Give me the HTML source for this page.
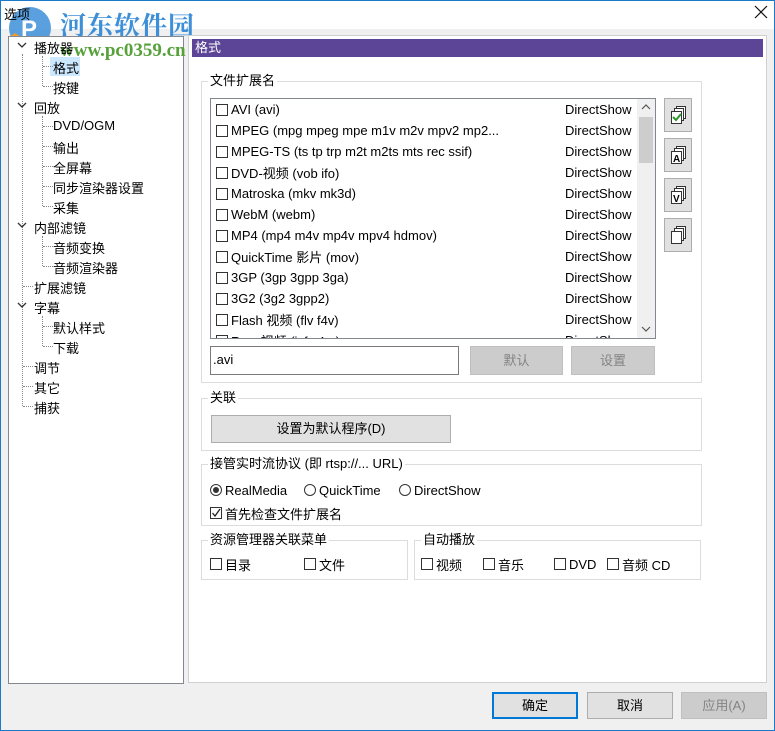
<!DOCTYPE html>
<html><head><meta charset="utf-8"><style>
*{margin:0;padding:0;box-sizing:border-box}
body{width:775px;height:731px;background:#f0f0f0;font-family:"Liberation Sans","Noto Sans CJK SC",sans-serif;font-size:13px;color:#000;position:relative;overflow:hidden}
.a{position:absolute;white-space:nowrap}
.l{display:flex;align-items:center;height:16px}
.cb{display:inline-block;width:12px;height:12px;border:1px solid #333;background:#fff;margin-right:3px;position:relative;flex:none}
.rb{display:inline-block;width:12px;height:12px;border:1px solid #333;border-radius:50%;background:#fff;margin-right:3px;position:relative;flex:none}
.grp{position:absolute;border:1px solid #dcdcdc}
.gl{position:absolute;top:-9px;left:6px;background:#fff;padding:0 2px;line-height:16px}
.btn{position:absolute;background:#e1e1e1;border:1px solid #adadad;text-align:center}
.dis{background:#cccccc;border-color:#bfbfbf;color:#838383}
.dv{position:absolute;border-left:1px dotted #888}
.dh{position:absolute;border-top:1px dotted #888;width:10px}
.ib{position:absolute;width:28px;height:34px;background:#e1e1e1;border:1px solid #adadad}
.row{display:flex;align-items:center;height:21px}
</style></head><body>
<div class="a" style="left:0;top:0;width:775px;height:29px;background:#fff"></div>
<div class="a" style="left:0;top:0;width:1px;height:731px;background:#1979ca"></div>
<div class="a" style="right:0;top:0;width:1px;height:731px;background:#1979ca"></div>
<div class="a" style="left:0;bottom:0;width:775px;height:1px;background:#1979ca"></div>
<div class="a" style="left:0;top:0;width:775px;height:1px;background:#1979ca"></div>
<!-- watermark -->
<svg class="a" style="left:5px;top:5px" width="50" height="50" viewBox="0 0 50 50"><circle cx="25" cy="23" r="21" fill="#3d8fd8" opacity="0.85"/><path d="M4 32 Q20 50 44 30 Q30 42 10 28Z" fill="#f39a2a"/><text x="16" y="32" font-size="24" fill="#fff" font-family="Liberation Sans" font-weight="bold">P</text></svg>
<div class="a" style="left:4px;top:4px;font-size:13px">选项</div>
<div class="a" style="left:60px;top:6px;font-size:26px;font-weight:bold;color:#3d8fd8;font-family:'Liberation Serif','Noto Serif CJK SC',serif;letter-spacing:1px">河东软件园</div>
<svg class="a" style="left:754px;top:5px" width="14" height="14"><path d="M1 1L13 13M13 1L1 13" stroke="#111" stroke-width="1.2"/></svg>
<!-- tree -->
<div class="a" style="left:8px;top:36px;width:176px;height:648px;background:#fff;border:1px solid #828790"></div>
<div class="a" style="left:60px;top:40px;font-size:19px;font-weight:bold;color:#57a03a;font-family:'Liberation Serif',serif">www.pc0359.cn</div>
<div class="a" style="left:50px;top:57px;width:30px;height:19px;background:#cce8ff"></div>
<div class="dv" style="left:22px;top:54px;height:352px"></div>
<div class="dv" style="left:42px;top:56px;height:30px"></div>
<div class="dv" style="left:42px;top:116px;height:90px"></div>
<div class="dv" style="left:42px;top:236px;height:30px"></div>
<div class="dv" style="left:42px;top:316px;height:30px"></div>
<div class="dh" style="left:43px;top:66px"></div><div class="dh" style="left:43px;top:86px"></div>
<div class="dh" style="left:43px;top:126px"></div><div class="dh" style="left:43px;top:146px"></div><div class="dh" style="left:43px;top:166px"></div><div class="dh" style="left:43px;top:186px"></div><div class="dh" style="left:43px;top:206px"></div>
<div class="dh" style="left:43px;top:246px"></div><div class="dh" style="left:43px;top:266px"></div>
<div class="dh" style="left:43px;top:326px"></div><div class="dh" style="left:43px;top:346px"></div>
<div class="dh" style="left:23px;top:286px"></div><div class="dh" style="left:23px;top:366px"></div><div class="dh" style="left:23px;top:386px"></div><div class="dh" style="left:23px;top:406px"></div>
<svg class="a" style="left:16px;top:40px" width="14" height="280">
<g stroke="#333" stroke-width="1.3" fill="none"><path d="M2 3l4 4 4-4"/><path d="M2 63l4 4 4-4"/><path d="M2 183l4 4 4-4"/><path d="M2 263l4 4 4-4"/></g></svg>
<div class="a" style="left:34px;top:38px">播放器</div>
<div class="a" style="left:53px;top:58px">格式</div>
<div class="a" style="left:53px;top:78px">按键</div>
<div class="a" style="left:34px;top:98px">回放</div>
<div class="a" style="left:53px;top:118px">DVD/OGM</div>
<div class="a" style="left:53px;top:138px">输出</div>
<div class="a" style="left:53px;top:158px">全屏幕</div>
<div class="a" style="left:53px;top:178px">同步渲染器设置</div>
<div class="a" style="left:53px;top:198px">采集</div>
<div class="a" style="left:34px;top:218px">内部滤镜</div>
<div class="a" style="left:53px;top:238px">音频变换</div>
<div class="a" style="left:53px;top:258px">音频渲染器</div>
<div class="a" style="left:34px;top:278px">扩展滤镜</div>
<div class="a" style="left:34px;top:298px">字幕</div>
<div class="a" style="left:53px;top:318px">默认样式</div>
<div class="a" style="left:53px;top:338px">下载</div>
<div class="a" style="left:34px;top:358px">调节</div>
<div class="a" style="left:34px;top:378px">其它</div>
<div class="a" style="left:34px;top:398px">捕获</div>
<!-- right panel -->
<div class="a" style="left:188px;top:35px;width:579px;height:648px;background:#fff;border:1px solid #d0d0d0"></div>
<div class="a" style="left:192px;top:39px;width:571px;height:18px;background:#5c4596;color:#fff;padding-left:3px;line-height:18px">格式</div>
<div class="grp" style="left:201px;top:81px;width:501px;height:302px"><div class="gl">文件扩展名</div></div>
<div class="a" style="left:210px;top:98px;width:446px;height:241px;border:1px solid #828790;background:#fff;overflow:hidden">
<div class="a" style="left:5px;top:0;width:420px">
<div class="row"><span class="cb"></span>AVI (avi)</div>
<div class="row"><span class="cb"></span>MPEG (mpg mpeg mpe m1v m2v mpv2 mp2...</div>
<div class="row"><span class="cb"></span>MPEG-TS (ts tp trp m2t m2ts mts rec ssif)</div>
<div class="row"><span class="cb"></span>DVD-视频 (vob ifo)</div>
<div class="row"><span class="cb"></span>Matroska (mkv mk3d)</div>
<div class="row"><span class="cb"></span>WebM (webm)</div>
<div class="row"><span class="cb"></span>MP4 (mp4 m4v mp4v mpv4 hdmov)</div>
<div class="row"><span class="cb"></span>QuickTime 影片 (mov)</div>
<div class="row"><span class="cb"></span>3GP (3gp 3gpp 3ga)</div>
<div class="row"><span class="cb"></span>3G2 (3g2 3gpp2)</div>
<div class="row"><span class="cb"></span>Flash 视频 (flv f4v)</div>
<div class="row"><span class="cb"></span>Raw 视频 (ivf y4m)</div>
</div>
<div class="a" style="left:354px;top:0;line-height:21px">DirectShow<br>DirectShow<br>DirectShow<br>DirectShow<br>DirectShow<br>DirectShow<br>DirectShow<br>DirectShow<br>DirectShow<br>DirectShow<br>DirectShow<br>DirectShow</div>
<div class="a" style="left:426px;top:0;width:18px;height:239px;background:#f0f0f0"></div>
<div class="a" style="left:428px;top:18px;width:14px;height:46px;background:#cdcdcd"></div>
<svg class="a" style="left:430px;top:4px" width="10" height="232"><g stroke="#555" stroke-width="1.2" fill="none"><path d="M1 6l4-4 4 4"/><path d="M1 224l4 4 4-4"/></g></svg>
</div>
<div class="ib" style="left:664px;top:98px"></div><div class="ib" style="left:664px;top:138px"></div><div class="ib" style="left:664px;top:178px"></div><div class="ib" style="left:664px;top:218px"></div>
<svg class="a" style="left:668px;top:104px" width="20" height="200" viewBox="0 0 20 200">
<g fill="#fff" stroke="#333"><rect x="8.5" y="2.5" width="9" height="12"/><rect x="6.5" y="4.5" width="9" height="12"/><rect x="3.5" y="7.5" width="10" height="12"/></g>
<path d="M5 13 l3 3 l5 -6" stroke="#2a9a2a" stroke-width="2" fill="none"/>
<g fill="#fff" stroke="#333"><rect x="8.5" y="42.5" width="9" height="12"/><rect x="6.5" y="44.5" width="9" height="12"/><rect x="3.5" y="47.5" width="10" height="12"/></g>
<text x="5" y="58" font-size="10" font-family="Liberation Sans" font-weight="bold">A</text>
<g fill="#fff" stroke="#333"><rect x="8.5" y="82.5" width="9" height="12"/><rect x="6.5" y="84.5" width="9" height="12"/><rect x="3.5" y="87.5" width="10" height="12"/></g>
<text x="5" y="98" font-size="10" font-family="Liberation Sans" font-weight="bold">V</text>
<g fill="#fff" stroke="#333"><rect x="8.5" y="122.5" width="9" height="12"/><rect x="6.5" y="124.5" width="9" height="12"/><rect x="3.5" y="127.5" width="10" height="12"/></g>
</svg>
<div class="a" style="left:210px;top:346px;width:249px;height:29px;border:1px solid #7a7a7a;background:#fff;padding:5px 2px">.avi</div>
<div class="btn dis" style="left:470px;top:346px;width:93px;height:29px;line-height:27px">默认</div>
<div class="btn dis" style="left:571px;top:346px;width:84px;height:29px;line-height:27px">设置</div>
<div class="grp" style="left:201px;top:398px;width:501px;height:53px"><div class="gl">关联</div></div>
<div class="btn" style="left:211px;top:415px;width:240px;height:28px;line-height:26px">设置为默认程序(D)</div>
<div class="grp" style="left:201px;top:464px;width:501px;height:62px"><div class="gl">接管实时流协议 (即 rtsp://... URL)</div></div>
<div class="a l" style="left:210px;top:482px"><span class="rb"><span style="position:absolute;left:2px;top:2px;width:6px;height:6px;border-radius:50%;background:#333"></span></span>RealMedia</div>
<div class="a l" style="left:304px;top:482px"><span class="rb"></span>QuickTime</div>
<div class="a l" style="left:399px;top:482px"><span class="rb"></span>DirectShow</div>
<div class="a l" style="left:210px;top:505px"><span class="cb"><svg style="position:absolute;left:0;top:0" width="10" height="10"><path d="M1.5 5 l2.5 3 l5 -7" stroke="#222" stroke-width="1.3" fill="none"/></svg></span>首先检查文件扩展名</div>
<div class="grp" style="left:201px;top:540px;width:207px;height:40px"><div class="gl">资源管理器关联菜单</div></div>
<div class="a l" style="left:210px;top:556px"><span class="cb"></span>目录</div>
<div class="a l" style="left:304px;top:556px"><span class="cb"></span>文件</div>
<div class="grp" style="left:414px;top:540px;width:287px;height:40px"><div class="gl">自动播放</div></div>
<div class="a l" style="left:421px;top:556px"><span class="cb"></span>视频</div>
<div class="a l" style="left:483px;top:556px"><span class="cb"></span>音乐</div>
<div class="a l" style="left:554px;top:556px"><span class="cb"></span>DVD</div>
<div class="a l" style="left:607px;top:556px"><span class="cb"></span>音频 CD</div>
<!-- bottom buttons -->
<div class="btn" style="left:492px;top:692px;width:86px;height:27px;line-height:23px;border:2px solid #0078d7">确定</div>
<div class="btn" style="left:587px;top:692px;width:86px;height:27px;line-height:25px">取消</div>
<div class="btn dis" style="left:681px;top:692px;width:86px;height:27px;line-height:25px">应用(A)</div>
</body></html>
